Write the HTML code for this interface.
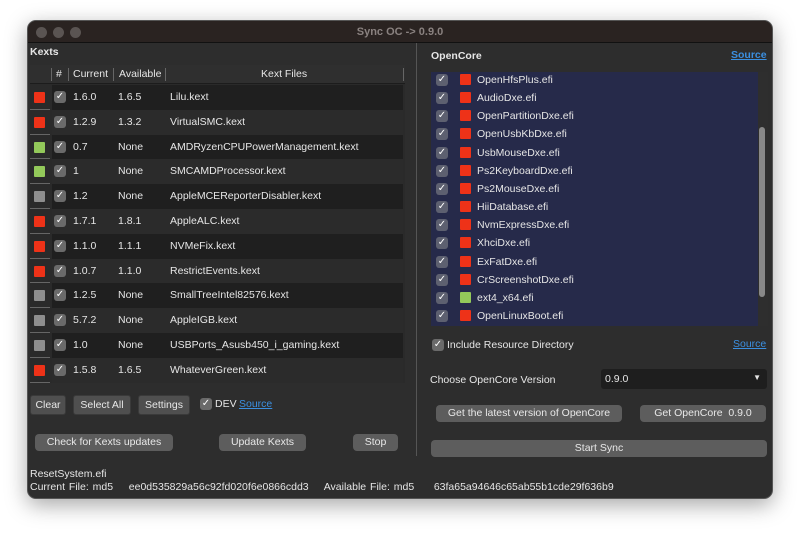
<!DOCTYPE html>
<html><head><meta charset="utf-8"><style>
*{margin:0;padding:0;box-sizing:border-box}
body{width:800px;height:533px;background:#fff;font-family:"Liberation Sans",sans-serif;font-size:10.5px;color:#e6e6e6;position:relative;overflow:hidden}
.win{position:absolute;left:27px;top:20px;width:746px;height:479px;background:#2d2d2d;border-radius:9px;overflow:hidden;box-shadow:0 6px 22px rgba(0,0,0,.35);border:1px solid #555}
.tb{position:absolute;left:0;top:0;width:100%;height:22px;background:#2a2321;border-bottom:1px solid #111}
.dot{position:absolute;top:6px;width:11px;height:11px;border-radius:50%;background:#5a5452}
.title{position:absolute;top:5px;left:0;width:100%;text-align:center;color:#8a8280;font-weight:bold;font-size:11px}
.a{position:absolute;white-space:nowrap}
.b{font-weight:bold}
.sq{position:absolute;width:11px;height:11px;border-radius:1px}
.r{background:#ee3218}.g{background:#93c95a}.y{background:#8e8e8e}
.cb{position:absolute;width:12px;height:12px;border-radius:3px;background:#6a6a6a;color:#fff;font-size:10px;line-height:12px;text-align:center}
.btn{position:absolute;background:#4f4f4f;border:1px solid #3a3a3a;border-radius:3px;color:#e8e8e8;text-align:center;font-size:10.5px}
.btn2{position:absolute;background:#5d5d5d;border-radius:4px;color:#e8e8e8;text-align:center;font-size:10.5px;height:17px;line-height:17px}
.link{color:#3b8fe0;text-decoration:underline;font-weight:bold}
</style></head><body>
<div class="win">
<div class="tb"><div class="dot" style="left:8px"></div><div class="dot" style="left:25px"></div><div class="dot" style="left:42px"></div><div class="title">Sync OC -&gt; 0.9.0</div></div>

<div class="a b" style="left:2px;top:25px">Kexts</div>
<div class="a" style="left:2px;top:44px;width:375px;height:318px;background:#2a2a2a"></div>
<div class="a" style="left:2px;top:44px;width:375px;height:19px;background:#2f2f2f;border-bottom:1px solid #1c1c1c"></div>
<div class="a" style="left:23px;top:47px;width:1px;height:13px;background:#666"></div>
<div class="a" style="left:40px;top:47px;width:1px;height:13px;background:#666"></div>
<div class="a" style="left:85px;top:47px;width:1px;height:13px;background:#666"></div>
<div class="a" style="left:137px;top:47px;width:1px;height:13px;background:#666"></div>
<div class="a" style="left:375px;top:47px;width:1px;height:13px;background:#666"></div>
<div class="a" style="left:28px;top:47px">#</div>
<div class="a" style="left:45px;top:47px">Current</div>
<div class="a" style="left:91px;top:47px">Available</div>
<div class="a" style="left:233px;top:47px">Kext Files</div>
<div id="rows"></div>

<div class="a" style="left:388px;top:22px;width:1px;height:413px;background:#555"></div>

<div class="btn" style="left:2px;top:374px;width:36px;height:20px;line-height:18px">Clear</div>
<div class="btn" style="left:45px;top:374px;width:58px;height:20px;line-height:18px">Select All</div>
<div class="btn" style="left:110px;top:374px;width:52px;height:20px;line-height:18px">Settings</div>
<div class="cb" style="left:172px;top:377px">✓</div>
<div class="a" style="left:187px;top:377px">DEV</div>
<div class="a link" style="left:211px;top:377px;font-weight:normal">Source</div>

<div class="btn2" style="left:7px;top:413px;width:138px">Check for Kexts updates</div>
<div class="btn2" style="left:191px;top:413px;width:87px">Update Kexts</div>
<div class="btn2" style="left:325px;top:413px;width:45px">Stop</div>

<div class="a" style="left:2px;top:447px">ResetSystem.efi</div>
<div class="a" style="left:2px;top:460px;word-spacing:1px">Current File: md5 &nbsp;&nbsp; ee0d535829a56c92fd020f6e0866cdd3 &nbsp;&nbsp; Available File: md5 &nbsp;&nbsp;&nbsp; 63fa65a94646c65ab55b1cde29f636b9</div>

<div class="a b" style="left:403px;top:29px">OpenCore</div>
<div class="a link" style="left:703px;top:28px">Source</div>
<div class="a" style="left:403px;top:51px;width:327px;height:254px;background:#262a4a"></div>
<div class="a" style="left:730px;top:51px;width:10px;height:254px;background:#2e2e2e"></div>
<div class="a" style="left:731px;top:106px;width:6px;height:170px;background:#888;border-radius:3px"></div>
<div id="efis"></div>

<div class="cb" style="left:404px;top:318px">✓</div>
<div class="a" style="left:419px;top:318px">Include Resource Directory</div>
<div class="a link" style="left:705px;top:317px;font-weight:normal">Source</div>
<div class="a" style="left:402px;top:353px">Choose OpenCore Version</div>
<div class="a" style="left:573px;top:348px;width:166px;height:20px;background:#1e1e1e;border-radius:3px;padding:4px 0 0 4px">0.9.0<span style="position:absolute;right:6px;top:4px;font-size:8px">▼</span></div>
<div class="btn2" style="left:408px;top:384px;width:186px">Get the latest version of OpenCore</div>
<div class="btn2" style="left:612px;top:384px;width:126px">Get OpenCore &nbsp;0.9.0</div>
<div class="btn2" style="left:403px;top:419px;width:336px">Start Sync</div>
</div>
<script>
var k=[["r","1.6.0","1.6.5","Lilu.kext"],["r","1.2.9","1.3.2","VirtualSMC.kext"],["g","0.7","None","AMDRyzenCPUPowerManagement.kext"],["g","1","None","SMCAMDProcessor.kext"],["y","1.2","None","AppleMCEReporterDisabler.kext"],["r","1.7.1","1.8.1","AppleALC.kext"],["r","1.1.0","1.1.1","NVMeFix.kext"],["r","1.0.7","1.1.0","RestrictEvents.kext"],["y","1.2.5","None","SmallTreeIntel82576.kext"],["y","5.7.2","None","AppleIGB.kext"],["y","1.0","None","USBPorts_Asusb450_i_gaming.kext"],["r","1.5.8","1.6.5","WhateverGreen.kext"]];
var h="";k.forEach(function(r,i){var t=64+i*24.8;
h+='<div class="a" style="left:24px;top:'+t+'px;width:351px;height:24.8px;background:'+(i%2?'#2b2b2b':'#1f1f1f')+'"></div>';
h+='<div class="a" style="left:2px;top:'+(t+23.8)+'px;width:20px;height:1px;background:#666"></div>';
h+='<div class="sq '+r[0]+'" style="left:6px;top:'+(t+7)+'px"></div>';
h+='<div class="cb" style="left:26px;top:'+(t+6)+'px">✓</div>';
h+='<div class="a" style="left:45px;top:'+(t+6)+'px">'+r[1]+'</div>';
h+='<div class="a" style="left:90px;top:'+(t+6)+'px">'+r[2]+'</div>';
h+='<div class="a" style="left:142px;top:'+(t+6)+'px">'+r[3]+'</div>';});
document.getElementById("rows").outerHTML=h;
var e=["OpenHfsPlus.efi","AudioDxe.efi","OpenPartitionDxe.efi","OpenUsbKbDxe.efi","UsbMouseDxe.efi","Ps2KeyboardDxe.efi","Ps2MouseDxe.efi","HiiDatabase.efi","NvmExpressDxe.efi","XhciDxe.efi","ExFatDxe.efi","CrScreenshotDxe.efi","ext4_x64.efi","OpenLinuxBoot.efi"];
h="";e.forEach(function(n,i){var t=53+i*18.15;
h+='<div class="cb" style="left:408px;top:'+t+'px;background:#5d6070">✓</div>';
h+='<div class="sq '+(n=="ext4_x64.efi"?"g":"r")+'" style="left:432px;top:'+t+'px"></div>';
h+='<div class="a" style="left:449px;top:'+t+'px">'+n+'</div>';});
document.getElementById("efis").outerHTML=h;
</script>
</body></html>
